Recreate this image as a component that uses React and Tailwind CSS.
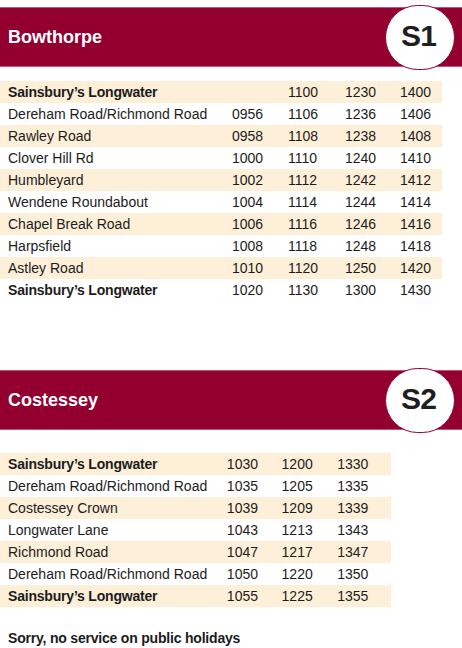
import React from 'react'

const s1 = [
    { stop: "Sainsbury’s Longwater", times: ['', '1100', '1230', '1400'], bold: true },
    { stop: 'Dereham Road/Richmond Road', times: ['0956', '1106', '1236', '1406'] },
    { stop: 'Rawley Road', times: ['0958', '1108', '1238', '1408'] },
    { stop: 'Clover Hill Rd', times: ['1000', '1110', '1240', '1410'] },
    { stop: 'Humbleyard', times: ['1002', '1112', '1242', '1412'] },
    { stop: 'Wendene Roundabout', times: ['1004', '1114', '1244', '1414'] },
    { stop: 'Chapel Break Road', times: ['1006', '1116', '1246', '1416'] },
    { stop: 'Harpsfield', times: ['1008', '1118', '1248', '1418'] },
    { stop: 'Astley Road', times: ['1010', '1120', '1250', '1420'] },
    { stop: "Sainsbury’s Longwater", times: ['1020', '1130', '1300', '1430'], bold: true },
];

const s2 = [
    { stop: "Sainsbury’s Longwater", times: ['1030', '1200', '1330'], bold: true },
    { stop: 'Dereham Road/Richmond Road', times: ['1035', '1205', '1335'] },
    { stop: 'Costessey Crown', times: ['1039', '1209', '1339'] },
    { stop: 'Longwater Lane', times: ['1043', '1213', '1343'] },
    { stop: 'Richmond Road', times: ['1047', '1217', '1347'] },
    { stop: 'Dereham Road/Richmond Road', times: ['1050', '1220', '1350'] },
    { stop: "Sainsbury’s Longwater", times: ['1055', '1225', '1355'], bold: true },
];

const colW = ['w-[56px]', 'w-[57px]', 'w-[55px]', 'w-[42px]'];

const RouteHeader = ({ name, code }) => (
    <div className="relative">
        <div className="h-[60px] bg-[#930030] border-y border-[#c0577a] flex items-center px-2">
            <span className="text-white font-bold text-[18px]">{name}</span>
        </div>
        {/* route badge */}
        <div className="absolute right-[7px] top-[-2px] w-[70px] h-[65px] rounded-full bg-white border border-[#930030] flex items-center justify-center">
            <span className="text-[#1f1f1f] font-bold text-[30px] tracking-tight pr-[3px] pb-[3px]">{code}</span>
        </div>
    </div>
);

const Timetable = ({ rows, width }) => (
    <div className={width}>
        {rows.map((r, i) => (
            <div key={i} className={`flex h-[22px] items-center ${i % 2 === 0 ? 'bg-[#fdefd8]' : ''}`}>
                <div className={`w-[232px] pl-2 ${r.bold ? 'font-bold tracking-[-0.2px]' : ''}`}>{r.stop}</div>
                {r.times.map((t, j) => (
                    <div key={j} className={colW[j]}>{t}</div>
                ))}
            </div>
        ))}
    </div>
);

export default function App() {
    return (
        <div className="w-[462px] h-[648px] bg-white text-[14px] leading-[22px] text-[#1c1c1c] overflow-hidden" style={{ fontFamily: '"Liberation Sans", Arial, sans-serif' }}>
            <div className="pt-[7px]">
                <RouteHeader name="Bowthorpe" code="S1" />
            </div>
            <div className="mt-[14px]">
                <Timetable rows={s1} width="w-[442px]" />
            </div>
            <div className="mt-[69px]">
                <RouteHeader name="Costessey" code="S2" />
            </div>
            <div className="mt-[23px]">
                <Timetable rows={s2} width="w-[391px]" />
            </div>
            <div className="mt-[20px] pl-2 font-bold text-[14px] tracking-[-0.2px]">
                Sorry, no service on public holidays
            </div>
        </div>
    );
}
